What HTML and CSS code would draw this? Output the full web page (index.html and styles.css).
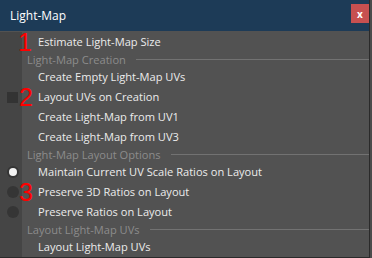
FILE: index.html
```html
<!DOCTYPE html>
<html>
<head>
<meta charset="utf-8">
<link rel="stylesheet" href="styles.css">
</head>
<body>
<div class="window">
  <div class="titlebar">
    <span class="title">Light-Map</span>
    <span class="close">x</span>
  </div>
  <div class="menu">
    <div class="row item"><div class="gutter"></div><div class="label">Estimate Light-Map Size</div><span class="num n1">1</span></div>
    <div class="row header"><div class="gutter"></div><div class="hlabel">Light-Map Creation</div></div>
    <div class="row item"><div class="gutter"></div><div class="label">Create Empty Light-Map UVs</div></div>
    <div class="row item"><div class="gutter"><span class="check"></span></div><div class="label">Layout UVs on Creation</div><span class="num n2">2</span></div>
    <div class="row item"><div class="gutter"></div><div class="label">Create Light-Map from UV1</div></div>
    <div class="row item"><div class="gutter"></div><div class="label">Create Light-Map from UV3</div></div>
    <div class="row header"><div class="gutter"></div><div class="hlabel">Light-Map Layout Options</div></div>
    <div class="row item"><div class="gutter"><span class="radio on"></span></div><div class="label">Maintain Current UV Scale Ratios on Layout</div></div>
    <div class="row item"><div class="gutter"><span class="radio"></span></div><div class="label">Preserve 3D Ratios on Layout</div><span class="num n3">3</span></div>
    <div class="row item"><div class="gutter"><span class="radio"></span></div><div class="label">Preserve Ratios on Layout</div></div>
    <div class="row header"><div class="gutter"></div><div class="hlabel">Layout Light-Map UVs</div></div>
    <div class="row item"><div class="gutter"></div><div class="label">Layout Light-Map UVs</div></div>
  </div>
</div>
</body>
</html>
```

FILE: styles.css
```css
html, body {
  margin: 0;
  padding: 0;
}
body {
  background: #4b4b4b;
  width: 372px;
  height: 258px;
  overflow: hidden;
  font-family: "Open Sans", "DejaVu Sans", sans-serif;
}
.window {
  width: 369px;
  height: 257px;
  border-right: 1px solid #2a2a2a;
  border-bottom: 1px solid #2a2a2a;
  background: #525252;
  display: flex;
  flex-direction: column;
}
.titlebar {
  height: 31px;
  flex: none;
  background: #1d3b57;
  display: flex;
  align-items: center;
  justify-content: space-between;
  padding: 0 0 0 10px;
}
.title {
  color: #ffffff;
  font-size: 12px;
  margin-top: -1px;
}
.close {
  width: 18px;
  height: 19px;
  margin-top: -4px;
  background: #c75050;
  color: #ffffff;
  font-size: 10px;
  font-weight: bold;
  display: flex;
  align-items: center;
  justify-content: center;
  line-height: 1;
}
.menu {
  flex: 1;
  padding-top: 1px;
  display: flex;
  flex-direction: column;
}
.row {
  position: relative;
  display: flex;
  align-items: stretch;
}
.item {
  height: 20px;
}
.header {
  height: 15px;
}
.gutter {
  width: 22px;
  flex: none;
  background: #454545;
  display: flex;
  align-items: center;
  padding-left: 7px;
  box-sizing: border-box;
}
.label {
  color: #ececec;
  font-size: 11.1px;
  line-height: 20px;
  padding-left: 16px;
  white-space: nowrap;
}
.hlabel {
  flex: 1;
  display: flex;
  align-items: center;
  color: #8c8c8c;
  font-size: 11.1px;
  line-height: 15px;
  padding-left: 5px;
  white-space: nowrap;
}
.hlabel::after {
  content: "";
  flex: 1;
  height: 1px;
  background: #727272;
  margin-left: 10px;
}
.check {
  width: 11px;
  height: 11px;
  background: #333333;
}
.radio {
  width: 12px;
  height: 12px;
  border-radius: 50%;
  background: #353535;
  display: flex;
  align-items: center;
  justify-content: center;
}
.radio.on::after {
  content: "";
  width: 8px;
  height: 8px;
  border-radius: 50%;
  background: #f2f2f2;
}
.num {
  position: absolute;
  left: 19px;
  top: -2px;
  color: #ff0000;
  font-family: "Liberation Sans", Arial, sans-serif;
  font-size: 25px;
  line-height: 25px;
}
.n1 {
  left: 18px;
}
```
